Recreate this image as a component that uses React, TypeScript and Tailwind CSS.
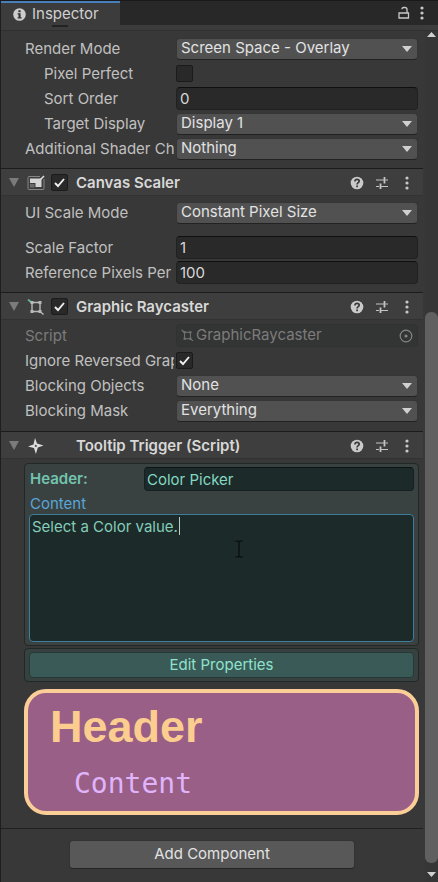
import React, { useId, useState } from "react";

function Dots() {
  return (
    <svg width="6" height="14" viewBox="0 0 6 14" fill="#c8c8c8">
      <circle cx="3" cy="2" r="1.6" />
      <circle cx="3" cy="7" r="1.6" />
      <circle cx="3" cy="12" r="1.6" />
    </svg>
  );
}

function HelpIcon() {
  return (
    <svg width="14" height="14" viewBox="0 0 14 14">
      <circle cx="7" cy="7" r="6.3" fill="#cacaca" />
      <path d="M4.9 5.4C4.9 4 5.8 3.3 7 3.3S9.2 4.1 9.2 5.2C9.2 6.6 7.1 6.7 7.1 8.4" fill="none" stroke="#3a3a3a" strokeWidth="1.7" />
      <rect x="6.2" y="9.5" width="1.8" height="1.7" fill="#3a3a3a" />
    </svg>
  );
}

function PresetIcon() {
  return (
    <svg width="14" height="14" viewBox="0 0 14 14" stroke="#c4c4c4" fill="none">
      <path d="M1 4H9M10.500 4H13M1 10.500H4M6 10.500H13" strokeWidth="1.2" />
      <path d="M9.500 1V7.500M5.500 7.500V13" strokeWidth="1.8" />
    </svg>
  );
}

function ScalerIcon() {
  return (
    <svg width="18" height="16" viewBox="0 0 18 16" fill="none">
      <path d="M13 1.5H2Q1 1.500 1 2.500V13.500Q1 14.500 2 14.500H16Q17 14.500 17 13.500V4" stroke="#858585" />
      <path d="M3 3.500H14.500V12H8.500V8H3Z" fill="#d6d6d6" />
      <rect x="3" y="9" width="4.500" height="3.500" fill="#6c6c6c" />
      <path d="M13.500 4.500L17 1" stroke="#dadada" strokeWidth="1.6" />
    </svg>
  );
}

function RaycasterIcon({ size, color, accent }: { size: number; color: string; accent: string }) {
  return (
    <svg width={size} height={size} viewBox="0 0 18 18" fill="none">
      <path d="M5 4.500H13V13.500H5Z" stroke={color} strokeWidth="1.4" />
      <path d="M1 1.500L4.500 4.500" stroke={accent} strokeWidth="1.7" />
      <path d="M13 13.500L16.500 16.500" stroke={color} strokeWidth="1.5" />
      <path d="M3.500 3H6.500V6H3.500ZM11.500 3H14.500V6H11.500ZM3.500 12H6.500V15H3.500ZM11.500 12H14.500V15H11.500Z" fill={color} />
    </svg>
  );
}

function ScriptIcon() {
  return (
    <svg width="18" height="18" viewBox="0 0 18 18">
      <path d="M8 1L10 6.500L16.500 8.500L10.800 10.500L8.900 17L7 11L1 9.500L6.500 7.500Z" fill="#dedede" />
      <path d="M8.700 7.500L10.200 9L8.900 10.300L7.500 9.100Z" fill="#4a4a4a" />
    </svg>
  );
}

function CheckBox({ id, label, initial = false }: { id?: string; label?: string; initial?: boolean }) {
  const [on, setOn] = useState(initial);
  return (
    <span className="relative block size-[17px]">
      <input
        id={id}
        type="checkbox"
        aria-label={label}
        checked={on}
        onChange={() => setOn(!on)}
        className="block size-[17px] appearance-none rounded-xs border border-[#1a1c1b] bg-[#282928]"
      />
      {on && (
        <svg className="pointer-events-none absolute inset-0" width="17" height="17" viewBox="0 0 17 17" fill="none">
          <path d="M4 9L7 12L13 5" stroke="#f0f0f0" strokeWidth="1.9" />
        </svg>
      )}
    </span>
  );
}

function Row({ id, label, indent = false, dim = false, children }: { id: string; label: string; indent?: boolean; dim?: boolean; children: React.ReactNode }) {
  return (
    <div className="flex h-[25px] items-center pr-[5px] pl-6">
      <label
        htmlFor={id}
        className={`w-[149px] shrink-0 overflow-hidden whitespace-nowrap leading-5 ${indent ? "pl-[19px]" : ""} ${dim ? "text-[#7c7c7c]" : "text-[#c0c0c0]"}`}
      >
        {label}
      </label>
      <div className="ml-[2px] min-w-0 flex-1">{children}</div>
    </div>
  );
}

function Dropdown({ label, value, indent }: { label: string; value: string; indent?: boolean }) {
  const id = useId();
  return (
    <Row id={id} label={label} indent={indent}>
      <div className="relative">
        <select
          id={id}
          className="block h-[22px] w-full appearance-none rounded-sm border border-[#363636] border-b-[#222] bg-[#515151] pb-[2px] pl-1 leading-[18px] text-[#e2e2e2]"
        >
          <option>{value}</option>
        </select>
        <svg className="pointer-events-none absolute top-2 right-[6px]" width="10" height="6" viewBox="0 0 10 6">
          <path d="M0 0H10L5 6Z" fill="#d0d0d0" />
        </svg>
      </div>
    </Row>
  );
}

function Field({ label, value, indent }: { label: string; value: string; indent?: boolean }) {
  const id = useId();
  return (
    <Row id={id} label={label} indent={indent}>
      <input
        id={id}
        defaultValue={value}
        className="block h-[23px] w-full rounded-sm border border-[#202222] border-t-[#0e1010] bg-[#292929] pl-[3px] text-[#d8d8d8]"
      />
    </Row>
  );
}

function Toggle({ label, initial, indent }: { label: string; initial?: boolean; indent?: boolean }) {
  const id = useId();
  return (
    <Row id={id} label={label} indent={indent}>
      <CheckBox id={id} initial={initial} />
    </Row>
  );
}

function SectionHeader({ title, icon, toggle }: { title: string; icon: React.ReactNode; toggle?: boolean }) {
  return (
    <header className="flex h-7 items-center border-t border-b border-t-[#1c1c1c] border-b-[#323232] bg-[#3e3e3e] pt-px pr-[9px] pl-[7px]">
      <button aria-label={`Collapse ${title}`} className="w-[19px]">
        <svg width="12" height="10" viewBox="0 0 12 10">
          <path d="M1 0H11L6 9Z" fill="#7b7b7b" />
        </svg>
      </button>
      <span className="flex w-6 items-center">{icon}</span>
      <span className="w-[25px]">{toggle && <CheckBox label={`Enable ${title}`} initial />}</span>
      <h2 className="flex-1 leading-5 font-semibold whitespace-nowrap text-[#d8d8d8]">{title}</h2>
      <div className="flex items-center gap-[11px]">
        <button aria-label="Help"><HelpIcon /></button>
        <button aria-label="Presets"><PresetIcon /></button>
        <button aria-label="Options" className="flex w-[14px] justify-center"><Dots /></button>
      </div>
    </header>
  );
}

export default function App() {
  return (
    <div className="flex min-h-screen flex-col border-l border-[#1e1e1e] bg-[#383838] font-['Inter',sans-serif] text-[15px] text-[#c0c0c0]">
      <nav className="flex h-[25px] border-t border-[#191919] bg-[#282828]">
        <button className="flex w-[119px] items-center gap-[6px] border-t-2 border-[#467fb9] bg-[#3c3c3c] pl-3 text-[#d0d0d0]">
          <svg width="13" height="13" viewBox="0 0 13 13">
            <circle cx="6.5" cy="6.5" r="6.3" fill="#cdcdcd" />
            <path d="M5.4 2.2H7.6V4.2H5.4ZM4.6 5.2H7.6V9.2H8.6V10.6H4.6V9.2H5.5V6.5H4.6Z" fill="#333" />
          </svg>
          Inspector
        </button>
        <div className="flex flex-1 items-center justify-end gap-[9px] pr-[13px]">
          <button aria-label="Lock">
            <svg width="12" height="14" viewBox="0 0 12 14" fill="none" stroke="#c8c8c8" strokeWidth="1.3">
              <path d="M1 7H10.5V12H1ZM9 7V3.5Q9 1.5 7 1.5H5.5Q4 1.5 4 3.2" />
            </svg>
          </button>
          <button aria-label="Menu"><Dots /></button>
        </div>
      </nav>
      <div className="flex h-[6px] items-start border-b border-[#303030] bg-[#3c3c3c] pl-[51px]">
        <span className="h-[2px] w-4 bg-[#232323]" />
      </div>

      <div className="flex flex-1">
        <main className="min-w-0 flex-1">
          <section className="pt-[5px] pb-[7px]">
            <Dropdown label="Render Mode" value="Screen Space - Overlay" />
            <Toggle label="Pixel Perfect" indent />
            <Field label="Sort Order" value="0" indent />
            <Dropdown label="Target Display" value="Display 1" indent />
            <Dropdown label="Additional Shader Channels" value="Nothing" />
          </section>

          <section>
            <SectionHeader title="Canvas Scaler" toggle icon={<ScalerIcon />} />
            <div className="pt-1 pb-[7px]">
              <Dropdown label="UI Scale Mode" value="Constant Pixel Size" />
              <div className="pt-[10px]">
                <Field label="Scale Factor" value="1" />
                <Field label="Reference Pixels Per Unit" value="100" />
              </div>
            </div>
          </section>

          <section>
            <SectionHeader title="Graphic Raycaster" toggle icon={<RaycasterIcon size={18} color="#b9b9b9" accent="#5fb8a0" />} />
            <div className="pt-[3px] pb-2">
              <Row id="script" label="Script" dim>
                <div className="flex h-[23px] items-center rounded-sm border border-[#303131] bg-[#333434] pr-1 pl-1">
                  <RaycasterIcon size={13} color="#747474" accent="#747474" />
                  <input id="script" readOnly value="GraphicRaycaster" className="ml-[2px] min-w-0 flex-1 text-[#7c7c7c]" />
                  <svg width="14" height="14" viewBox="0 0 14 14" fill="none">
                    <circle cx="7" cy="7" r="5.8" stroke="#858585" strokeWidth="1.2" />
                    <circle cx="7" cy="7" r="1.6" fill="#858585" />
                  </svg>
                </div>
              </Row>
              <Toggle label="Ignore Reversed Graphics" initial />
              <Dropdown label="Blocking Objects" value="None" />
              <Dropdown label="Blocking Mask" value="Everything" />
            </div>
          </section>

          <section>
            <SectionHeader title="Tooltip Trigger (Script)" icon={<ScriptIcon />} />
            <div className="pt-1 pr-1 pb-[13px] pl-[23px]">
              <div className="rounded-sm border border-[#202828] bg-[#3a4241] px-1 pt-[3px] pb-[3px]">
                <div className="flex items-center">
                  <label htmlFor="tip-header" className="w-[115px] pl-[1px] leading-5 font-semibold text-[#72c4ae]">Header:</label>
                  <input
                    id="tip-header"
                    defaultValue="Color Picker"
                    className="h-6 min-w-0 flex-1 rounded-sm border border-[#172020] border-t-[#0b1414] bg-[#1c2a2a] pl-[2px] text-[#84d8c0]"
                  />
                </div>
                <label htmlFor="tip-content" className="block pt-[3px] pl-[1px] leading-5 text-[#58a6d8]">Content</label>
                <div className="relative">
                  <textarea
                    id="tip-content"
                    defaultValue="Select a Color value."
                    className="block h-32 w-full resize-none rounded-sm border border-[#3f7d9c] bg-[#1c2a2a] pt-[2px] pl-[2px] leading-5 text-[#84cdb8]"
                  />
                  <span className="pointer-events-none absolute top-[3px] left-[150px] h-[18px] w-px bg-[#b4cfc8]" />
                  <svg className="pointer-events-none absolute top-[26px] left-[206px]" width="8" height="18" viewBox="0 0 8 18" fill="none">
                    <path d="M0 1H3L4 2L5 1H8M4 2V16M0 17H3L4 16L5 17H8" stroke="#080d0d" strokeWidth="1.2" />
                  </svg>
                </div>
              </div>
              <div className="mt-[2px] rounded-sm border border-[#202828] bg-[#374140] px-1 py-[3px]">
                <button className="block h-[26px] w-full rounded-sm border border-[#253a38] bg-[#395a57] leading-5 text-[#90e2cc]">Edit Properties</button>
              </div>
              <div className="mt-[7px] h-[126px] rounded-[22px] border-4 border-[#fbce98] bg-[#9a5f86] pt-[9px] pl-[22px]">
                <div className="font-['Liberation_Sans',Arial,sans-serif] text-[45px] leading-[50px] font-bold text-[#fbce90]">Header</div>
                <div className="pt-4 pl-6 font-['DejaVu_Sans_Mono',monospace] text-[28px] leading-8 text-[#dfb4fb]">Content</div>
              </div>
            </div>
          </section>

          <footer className="flex justify-center border-t border-[#202020] pt-[11px] pb-[13px]">
            <button className="h-[29px] w-[286px] rounded-sm border border-[#333] border-b-[#232323] bg-[#585858] text-[#e2e2e2]">Add Component</button>
          </footer>
        </main>

        <aside className="ml-[2px] flex w-[13px] flex-col items-center bg-[#363636] pt-[1px] pb-[5px]">
          <svg width="9" height="5" viewBox="0 0 9 5"><path d="M4.500 0L9 5H0Z" fill="#d0d0d0" /></svg>
          <div className="mt-[275px] mb-[9px] w-[13px] flex-1 rounded-md bg-[#606060]" />
          <svg width="9" height="5" viewBox="0 0 9 5"><path d="M0 0H9L4.500 5Z" fill="#d0d0d0" /></svg>
        </aside>
      </div>
    </div>
  );
}
